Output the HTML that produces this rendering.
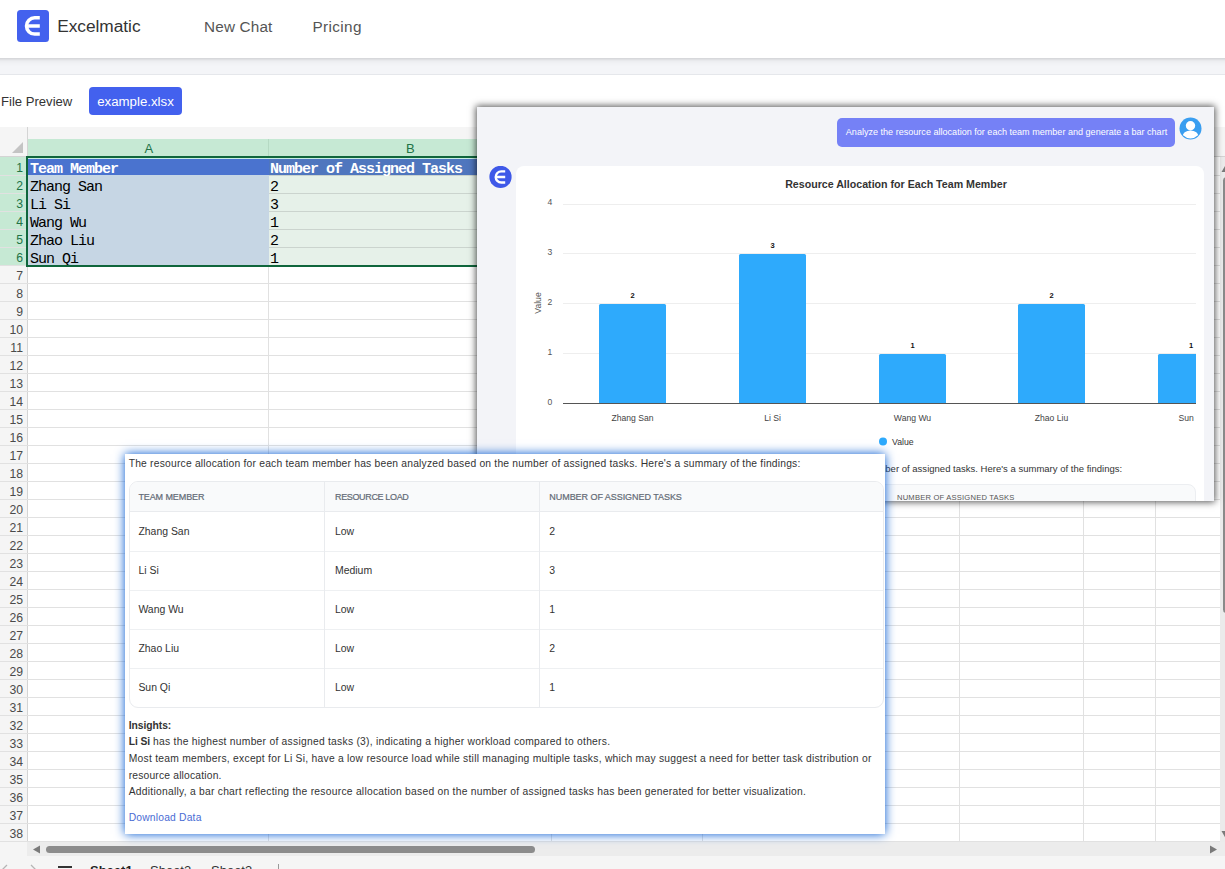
<!DOCTYPE html>
<html lang="en">
<head>
<meta charset="utf-8">
<title>Excelmatic</title>
<style>
*{box-sizing:border-box;margin:0;padding:0}
html,body{width:1225px;height:869px;overflow:hidden;background:#fff}
body{position:relative;font-family:"Liberation Sans",sans-serif;color:#333}
.abs{position:absolute}
.t{position:absolute;white-space:nowrap;line-height:1}
/* header */
#hdr{position:absolute;left:-12px;top:0;width:1249px;height:58px;padding-left:12px;background:#fff;box-shadow:0 1px 3px rgba(0,0,0,.11),0 2px 7px rgba(0,0,0,.08);z-index:3}
#hdr>*{margin-left:12px}
#band{position:absolute;left:0;top:58px;width:1225px;height:17px;background:#f4f5f8;border-bottom:1px solid #e5e7eb;z-index:1}
#logo{position:absolute;left:17px;top:10px;width:32px;height:32px;border-radius:3.5px;background:#4361ee}
#fbtn{position:absolute;left:89px;top:87px;width:93px;height:28px;border-radius:4px;background:#4361ee;color:#fff;font-size:13.25px;text-align:center;line-height:28px;padding-top:.5px}
/* sheet */
#sheet{position:absolute;left:0;top:127px;width:1225px;height:742px;background:#fff;overflow:hidden}
#topband{position:absolute;left:0;top:0;width:1225px;height:12px;background:#f5f5f5}
#colhdr{position:absolute;left:27px;top:12px;width:525px;height:18px;background:#c6e9d4}
#colhdr2{position:absolute;left:552px;top:12px;width:673px;height:18px;background:#f5f5f5;border-bottom:1px solid #d4d4d4}
#corner{position:absolute;left:0;top:0;width:28px;height:30px;background:#f5f5f5;border-right:1px solid #d4d4d4;border-bottom:1px solid #d4d4d4}
#rowhdr{position:absolute;left:0;top:30px;width:28px;height:685px;background:#f5f5f5;border-right:1px solid #d4d4d4}
.rn{position:absolute;left:0;width:23px;height:18px;text-align:right;font-size:12.2px;line-height:18px;color:#4a4a4a}
.rn.s{color:#217346}
.hl{position:absolute;left:0;width:1225px;height:1px;background:#e1e1e1}
.vl{position:absolute;top:30px;width:1px;height:685px;background:#e1e1e1}
.ct{position:absolute;white-space:nowrap;font-family:"Liberation Mono","Noto Serif CJK SC",monospace;font-size:15px;letter-spacing:-1px;line-height:18px;color:#000}

/* chat panel */
#panel{position:absolute;left:477px;top:107px;width:737px;height:394px;background:#f3f4f8;box-shadow:0 0 7px 1px rgba(0,0,0,.68);overflow:hidden;z-index:5}
#bubble{position:absolute;left:360px;top:11px;width:338px;height:29px;border-radius:5px;background:#7581f6;color:#fff;font-size:9.07px;line-height:29px;padding-left:1px;text-align:center;white-space:nowrap}
#ccard{position:absolute;left:39px;top:59px;width:688px;height:400px;border-radius:8px;background:#fff}
#panel svg text{font-family:"Liberation Sans",sans-serif}

/* response card */
#rcard{position:absolute;left:125px;top:454px;width:760px;height:380px;background:#fff;box-shadow:0 0 10px 0 rgb(0,88,208);z-index:6;overflow:hidden}
#rtable{position:absolute;left:4px;top:27px;width:755px;height:227px;border:1px solid #e9ebee;border-radius:9px;background:#fff;overflow:hidden}
#rtable .hd{position:absolute;left:0;top:0;width:100%;height:30px;background:#f9fafb;border-bottom:1px solid #e9ebee}
#rtable .rl{position:absolute;left:0;width:100%;height:1px;background:#eef0f2}
#rtable .cl{position:absolute;top:0;width:1px;height:100%;background:#e9ebee}
.th{position:absolute;white-space:nowrap;line-height:1;font-size:9px;color:#636a76;-webkit-text-stroke:.2px #636a76;margin-top:.4px}
.td{position:absolute;white-space:nowrap;line-height:1;font-size:10.45px;color:#333;margin-top:.8px}
.bt{position:absolute;white-space:nowrap;line-height:1;font-size:10.3px;letter-spacing:.255px;color:#333;left:3.7px;margin-top:.8px}
</style>
</head>
<body>

<!-- ============ top header ============ -->
<div id="hdr">
  <div id="logo">
    <svg width="32" height="32" viewBox="0 0 32 32"><path d="M22.8 7.8 H17.65 A8.15 8.15 0 0 0 17.65 24.1 H22.8 M10.5 16 H22.8" fill="none" stroke="#fff" stroke-width="3.5"/></svg>
  </div>
  <div class="t" style="left:57.2px;top:18.2px;font-size:17.3px;letter-spacing:-.02px;color:#333">Excelmatic</div>
  <div class="t" style="left:204px;top:18.9px;font-size:15.3px;letter-spacing:.17px;color:#555">New Chat</div>
  <div class="t" style="left:312.5px;top:18.9px;font-size:15.3px;letter-spacing:.37px;color:#555">Pricing</div>
</div>
<div id="band"></div>

<!-- ============ file preview bar ============ -->
<div class="t" style="left:1px;top:94.7px;font-size:13.1px;color:#333">File Preview</div>
<div id="fbtn">example.xlsx</div>

<!-- ============ spreadsheet ============ -->
<div id="sheet">
  <div id="topband"></div>
  <div id="colhdr"></div><div id="colhdr2"></div>
  <div id="rowhdr"></div>
  <div id="corner"></div>

  <div id="grid">
<!-- selected range fills -->
<div class="abs" style="left:0;top:30px;width:27px;height:109px;background:#c6e9d4"></div>
<div class="abs" style="left:269px;top:31px;width:282px;height:17px;background:#4f76be"></div>
<div class="abs" style="left:269px;top:48px;width:282px;height:91px;background:#e6f1e9"></div>
<div class="hl" style="top:48px"></div>
<div class="hl" style="top:66px"></div>
<div class="hl" style="top:84px"></div>
<div class="hl" style="top:102px"></div>
<div class="hl" style="top:120px"></div>
<div class="hl" style="top:138px"></div>
<div class="hl" style="top:156px"></div>
<div class="hl" style="top:174px"></div>
<div class="hl" style="top:192px"></div>
<div class="hl" style="top:210px"></div>
<div class="hl" style="top:228px"></div>
<div class="hl" style="top:246px"></div>
<div class="hl" style="top:264px"></div>
<div class="hl" style="top:282px"></div>
<div class="hl" style="top:300px"></div>
<div class="hl" style="top:318px"></div>
<div class="hl" style="top:336px"></div>
<div class="hl" style="top:354px"></div>
<div class="hl" style="top:372px"></div>
<div class="hl" style="top:390px"></div>
<div class="hl" style="top:408px"></div>
<div class="hl" style="top:426px"></div>
<div class="hl" style="top:444px"></div>
<div class="hl" style="top:462px"></div>
<div class="hl" style="top:480px"></div>
<div class="hl" style="top:498px"></div>
<div class="hl" style="top:516px"></div>
<div class="hl" style="top:534px"></div>
<div class="hl" style="top:552px"></div>
<div class="hl" style="top:570px"></div>
<div class="hl" style="top:588px"></div>
<div class="hl" style="top:606px"></div>
<div class="hl" style="top:624px"></div>
<div class="hl" style="top:642px"></div>
<div class="hl" style="top:660px"></div>
<div class="hl" style="top:678px"></div>
<div class="hl" style="top:696px"></div>
<div class="hl" style="top:714px"></div>
<div class="vl" style="left:268px"></div>
<div class="vl" style="left:551px"></div>
<div class="vl" style="left:702px"></div>
<div class="vl" style="left:959px"></div>
<div class="vl" style="left:1083px"></div>
<div class="vl" style="left:1155px"></div>
<div class="rn s" style="top:32px">1</div>
<div class="rn s" style="top:50px">2</div>
<div class="rn s" style="top:68px">3</div>
<div class="rn s" style="top:86px">4</div>
<div class="rn s" style="top:104px">5</div>
<div class="rn s" style="top:122px">6</div>
<div class="rn" style="top:140px">7</div>
<div class="rn" style="top:158px">8</div>
<div class="rn" style="top:176px">9</div>
<div class="rn" style="top:194px">10</div>
<div class="rn" style="top:212px">11</div>
<div class="rn" style="top:230px">12</div>
<div class="rn" style="top:248px">13</div>
<div class="rn" style="top:266px">14</div>
<div class="rn" style="top:284px">15</div>
<div class="rn" style="top:302px">16</div>
<div class="rn" style="top:320px">17</div>
<div class="rn" style="top:338px">18</div>
<div class="rn" style="top:356px">19</div>
<div class="rn" style="top:374px">20</div>
<div class="rn" style="top:392px">21</div>
<div class="rn" style="top:410px">22</div>
<div class="rn" style="top:428px">23</div>
<div class="rn" style="top:446px">24</div>
<div class="rn" style="top:464px">25</div>
<div class="rn" style="top:482px">26</div>
<div class="rn" style="top:500px">27</div>
<div class="rn" style="top:518px">28</div>
<div class="rn" style="top:536px">29</div>
<div class="rn" style="top:554px">30</div>
<div class="rn" style="top:572px">31</div>
<div class="rn" style="top:590px">32</div>
<div class="rn" style="top:608px">33</div>
<div class="rn" style="top:626px">34</div>
<div class="rn" style="top:644px">35</div>
<div class="rn" style="top:662px">36</div>
<div class="rn" style="top:680px">37</div>
<div class="rn" style="top:698px">38</div>
<!-- darker gridlines inside selected B cells -->
<div class="abs" style="left:269px;top:48px;width:283px;height:1px;background:#cbd4ce"></div><div class="abs" style="left:269px;top:66px;width:283px;height:1px;background:#cbd4ce"></div><div class="abs" style="left:269px;top:84px;width:283px;height:1px;background:#cbd4ce"></div><div class="abs" style="left:269px;top:102px;width:283px;height:1px;background:#cbd4ce"></div><div class="abs" style="left:269px;top:120px;width:283px;height:1px;background:#cbd4ce"></div>
<!-- col A fill (covers gridlines) -->
<div class="abs" style="left:28px;top:31px;width:241px;height:17px;background:#4a73cf"></div>
<div class="abs" style="left:28px;top:48px;width:241px;height:91px;background:#c6d6e4"></div>
<!-- cell text -->
<div class="ct" style="left:30px;top:34px;color:#fff;font-weight:bold">Team Member</div>
<div class="ct" style="left:270px;top:34px;color:#fff;font-weight:bold">Number of Assigned Tasks</div>
<div class="ct" style="left:30px;top:52px">Zhang San</div><div class="ct" style="left:270px;top:52px">2</div>
<div class="ct" style="left:30px;top:70px">Li Si</div><div class="ct" style="left:270px;top:70px">3</div>
<div class="ct" style="left:30px;top:88px">Wang Wu</div><div class="ct" style="left:270px;top:88px">1</div>
<div class="ct" style="left:30px;top:106px">Zhao Liu</div><div class="ct" style="left:270px;top:106px">2</div>
<div class="ct" style="left:30px;top:124px">Sun Qi</div><div class="ct" style="left:270px;top:124px">1</div>
<!-- column letters -->
<div class="t" style="left:144.5px;top:15px;font-size:13px;color:#217346">A</div>
<div class="t" style="left:406px;top:15px;font-size:13px;color:#217346">B</div>
<div class="abs" style="left:268px;top:12px;width:1px;height:18px;background:#b5d9c3"></div>
<!-- selection border -->
<div class="abs" style="left:26px;top:29px;width:530px;height:111px;border:2px solid #0f663c;border-right:0"></div>
<div class="abs" style="left:28px;top:31px;width:524px;height:1px;background:#c6eee6"></div>
<!-- corner triangle -->
<svg class="abs" style="left:11px;top:14px" width="13" height="13" viewBox="0 0 13 13"><path d="M12 1 V12 H1 Z" fill="#c4c4c4"/></svg>
</div>
  <!-- horizontal scrollbar -->
  <div class="abs" style="left:0;top:715px;width:1225px;height:14px;background:#ececec"></div>
  <div class="abs" style="left:0;top:715px;width:27px;height:14px;background:#f5f5f5"></div>
  <svg class="abs" style="left:31.5px;top:718px" width="9" height="9" viewBox="0 0 9 9"><path d="M8 0.5 V8.5 L1 4.5 Z" fill="#7a7a7a"/></svg>
  <svg class="abs" style="left:1208.5px;top:718px" width="9" height="9" viewBox="0 0 9 9"><path d="M1 0.5 V8.5 L8 4.5 Z" fill="#7a7a7a"/></svg>
  <div class="abs" style="left:46px;top:718.7px;width:489px;height:7px;border-radius:3.5px;background:#8c8c8c"></div>
  <!-- sheet tabs -->
  <div class="abs" style="left:0;top:729px;width:1225px;height:13px;background:#f5f5f5"></div>
  <div class="t" style="left:90px;top:736.5px;font-size:13px;font-weight:bold;color:#222">Sheet1</div>
  <div class="t" style="left:150px;top:736.5px;font-size:13px;color:#333">Sheet2</div>
  <div class="t" style="left:211px;top:736.5px;font-size:13px;color:#333">Sheet3</div>
  <div class="abs" style="left:58px;top:739px;width:14px;height:2px;background:#333"></div>
  <svg class="abs" style="left:0;top:736px" width="40" height="6" viewBox="0 0 40 6"><path d="M7 2 L2 7 M31 2 L36 7" fill="none" stroke="#b5b5b5" stroke-width="1.3"/></svg>
  <div class="abs" style="left:278px;top:737px;width:1px;height:6px;background:#999"></div>
  <!-- vertical scrollbar -->
  <div class="abs" style="left:1220px;top:30px;width:5px;height:685px;background:#ebebeb"></div>
  <div class="abs" style="left:1223px;top:50px;width:7px;height:436px;border-radius:3.5px;background:#8a8a8a"></div>
  <svg class="abs" style="left:1220.5px;top:37px" width="9" height="9" viewBox="0 0 9 9"><path d="M0.5 8 H8.5 L4.5 1 Z" fill="#7a7a7a"/></svg>
  <svg class="abs" style="left:1220.5px;top:703px" width="9" height="9" viewBox="0 0 9 9"><path d="M0.5 1 H8.5 L4.5 8 Z" fill="#7a7a7a"/></svg>
</div>


<!-- ============ chat panel (floating) ============ -->
<div id="panel">
  <div id="bubble">Analyze the resource allocation for each team member and generate a bar chart</div>
  <!-- user avatar -->
  <svg class="abs" style="left:702px;top:10px" width="23" height="23" viewBox="0 0 23 23">
    <defs><clipPath id="avc"><circle cx="11.5" cy="11.5" r="10"/></clipPath></defs>
    <circle cx="11.5" cy="11.5" r="11" fill="#3a9ef0"/>
    <g clip-path="url(#avc)" fill="#fff"><circle cx="11.5" cy="8.7" r="4.7"/><ellipse cx="11.5" cy="20.1" rx="8.2" ry="6.7"/></g>
  </svg>
  <!-- bot avatar -->
  <svg class="abs" style="left:12px;top:59px" width="24" height="24" viewBox="0 0 24 24">
    <circle cx="11.5" cy="10.9" r="11.1" fill="#3f59e8"/>
    <path d="M16.2 5.4 H12.25 A5.55 5.55 0 0 0 12.25 16.5 H16.2 M7.2 10.95 H16.2" fill="none" stroke="#fff" stroke-width="2.4"/>
  </svg>
  <div id="ccard"></div>
  <svg class="abs" style="left:0;top:0" width="737" height="394" viewBox="0 0 737 394"><line x1="86" x2="719" y1="97.5" y2="97.5" stroke="#eeeeee" stroke-width="1"/><line x1="86" x2="719" y1="146.5" y2="146.5" stroke="#eeeeee" stroke-width="1"/><line x1="86" x2="719" y1="196.5" y2="196.5" stroke="#eeeeee" stroke-width="1"/><line x1="86" x2="719" y1="246.5" y2="246.5" stroke="#eeeeee" stroke-width="1"/><line x1="86" x2="719" y1="296.5" y2="296.5" stroke="#555" stroke-width="1"/><text x="73" y="98.3" font-size="8.6" fill="#555" text-anchor="middle">4</text><text x="73" y="148.3" font-size="8.6" fill="#555" text-anchor="middle">3</text><text x="73" y="198.3" font-size="8.6" fill="#555" text-anchor="middle">2</text><text x="73" y="248.3" font-size="8.6" fill="#555" text-anchor="middle">1</text><text x="73" y="298.3" font-size="8.6" fill="#555" text-anchor="middle">0</text><path d="M122.0 296.0 V198.5 Q122.0 197.0 123.5 197.0 H187.5 Q189.0 197.0 189.0 198.5 V296.0 Z" fill="#2eaafc"/><path d="M262.0 296.0 V148.5 Q262.0 147.0 263.5 147.0 H327.5 Q329.0 147.0 329.0 148.5 V296.0 Z" fill="#2eaafc"/><path d="M402.0 296.0 V248.5 Q402.0 247.0 403.5 247.0 H467.5 Q469.0 247.0 469.0 248.5 V296.0 Z" fill="#2eaafc"/><path d="M541.0 296.0 V198.5 Q541.0 197.0 542.5 197.0 H606.5 Q608.0 197.0 608.0 198.5 V296.0 Z" fill="#2eaafc"/><path d="M681.0 296.0 V248.5 Q681.0 247.0 682.5 247.0 H719.0 V296.0 Z" fill="#2eaafc"/><text x="155.5" y="191" font-size="7.5" font-weight="bold" fill="#111" text-anchor="middle">2</text><text x="155.5" y="314" font-size="8.6" fill="#444" text-anchor="middle">Zhang San</text><text x="295.5" y="141" font-size="7.5" font-weight="bold" fill="#111" text-anchor="middle">3</text><text x="295.5" y="314" font-size="8.6" fill="#444" text-anchor="middle">Li Si</text><text x="435.5" y="241" font-size="7.5" font-weight="bold" fill="#111" text-anchor="middle">1</text><text x="435.5" y="314" font-size="8.6" fill="#444" text-anchor="middle">Wang Wu</text><text x="574.5" y="191" font-size="7.5" font-weight="bold" fill="#111" text-anchor="middle">2</text><text x="574.5" y="314" font-size="8.6" fill="#444" text-anchor="middle">Zhao Liu</text><text x="714" y="241" font-size="7.5" font-weight="bold" fill="#111" text-anchor="middle">1</text><text x="701.5" y="314" font-size="8.6" fill="#444">Sun</text><text x="419" y="80.5" font-size="10.65" font-weight="bold" fill="#333" text-anchor="middle">Resource Allocation for Each Team Member</text><text transform="translate(64,196) rotate(-90)" font-size="8.6" fill="#555" text-anchor="middle">Value</text><circle cx="406" cy="334.5" r="4" fill="#2eaafc"/><text x="415" y="337.5" font-size="8.7" fill="#333">Value</text></svg>
  <div class="t" style="left:49.4px;top:356.7px;font-size:9.5px;letter-spacing:.011px;color:#333">The resource allocation for each team member has been analyzed based on the number of assigned tasks. Here's a summary of the findings:</div>
  <div class="abs" style="left:51px;top:377px;width:668px;height:60px;border:1px solid #eceef1;border-radius:8px;background:#f9fafb"></div>
  <div class="t" style="left:420px;top:387px;font-size:7.6px;color:#555;letter-spacing:.2px">NUMBER OF ASSIGNED TASKS</div>
</div>

<!-- ============ response card (floating) ============ -->
<div id="rcard">
<div class="bt" style="top:4.3px;letter-spacing:.205px">The resource allocation for each team member has been analyzed based on the number of assigned tasks. Here's a summary of the findings:</div>
<div id="rtable">
<div class="hd"></div>
<div class="rl" style="top:69px"></div>
<div class="rl" style="top:108px"></div>
<div class="rl" style="top:147px"></div>
<div class="rl" style="top:186px"></div>
<div class="cl" style="left:194px"></div><div class="cl" style="left:409px"></div>
<div class="th" style="left:8.4px;top:11.1px;letter-spacing:-.09px">TEAM MEMBER</div>
<div class="th" style="left:205px;top:11.1px;letter-spacing:-.35px">RESOURCE LOAD</div>
<div class="th" style="left:419.3px;top:11.1px;letter-spacing:-.05px">NUMBER OF ASSIGNED TASKS</div>
<div class="td" style="left:8.4px;top:44.2px">Zhang San</div><div class="td" style="left:205px;top:44.2px">Low</div><div class="td" style="left:419.3px;top:44.2px">2</div>
<div class="td" style="left:8.4px;top:83.2px">Li Si</div><div class="td" style="left:205px;top:83.2px">Medium</div><div class="td" style="left:419.3px;top:83.2px">3</div>
<div class="td" style="left:8.4px;top:122.2px">Wang Wu</div><div class="td" style="left:205px;top:122.2px">Low</div><div class="td" style="left:419.3px;top:122.2px">1</div>
<div class="td" style="left:8.4px;top:161.2px">Zhao Liu</div><div class="td" style="left:205px;top:161.2px">Low</div><div class="td" style="left:419.3px;top:161.2px">2</div>
<div class="td" style="left:8.4px;top:200.2px">Sun Qi</div><div class="td" style="left:205px;top:200.2px">Low</div><div class="td" style="left:419.3px;top:200.2px">1</div>
</div>
<div class="bt" style="top:266.0px;font-weight:bold;letter-spacing:-.04px">Insights:</div>
<div class="bt" style="top:282.7px"><b style="letter-spacing:-.1px">Li Si</b> has the highest number of assigned tasks (3), indicating a higher workload compared to others.</div>
<div class="bt" style="top:299.6px">Most team members, except for Li Si, have a low resource load while still managing multiple tasks, which may suggest a need for better task distribution or</div>
<div class="bt" style="top:316.2px;letter-spacing:.18px">resource allocation.</div>
<div class="bt" style="top:332.7px">Additionally, a bar chart reflecting the resource allocation based on the number of assigned tasks has been generated for better visualization.</div>
<div class="bt" style="top:358.3px;color:#4a6cd4;letter-spacing:.19px">Download Data</div>
</div>

</body>
</html>
